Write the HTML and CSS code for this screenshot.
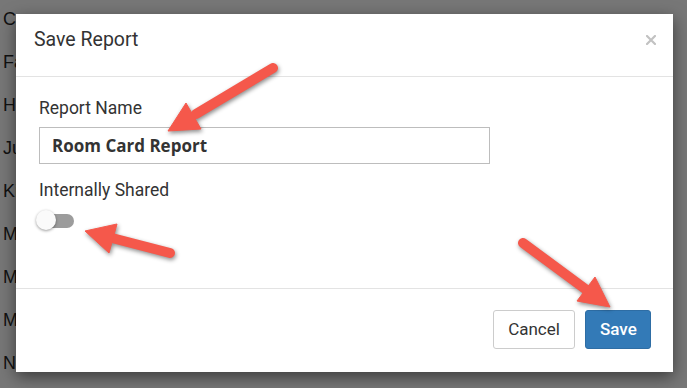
FILE: index.html
```html
<!DOCTYPE html>
<html lang="en-us">
<head>
    <meta charset="utf-8"/>
    <title>Save Report</title>
    <link rel="stylesheet" href="styles.css">
</head>
<body>

    <ul class="names">
        <li>C</li>
        <li>Fa</li>
        <li>H</li>
        <li>Ju</li>
        <li>Ki</li>
        <li>M</li>
        <li>M</li>
        <li>M</li>
        <li>N</li>
    </ul>

    <div class="modal">
        <div class="modal-header">
            <h4 class="modal-title">Save Report</h4>
            <button class="close" type="button" aria-label="Close">
                <svg width="10" height="10" viewBox="0 0 10 10">
                    <path d="M1 1L9 9M9 1L1 9" stroke="#c2c2c2" stroke-width="2.2" stroke-linecap="square"/>
                </svg>
            </button>
        </div>
        <div class="modal-body">
            <label for="reportName">Report Name</label>
            <input id="reportName" type="text" value="Room Card Report">
            <label class="shared-label">Internally Shared</label>
            <div class="toggle">
                <span class="toggle-track"></span>
                <span class="toggle-knob"></span>
            </div>
        </div>
        <div class="modal-footer">
            <button class="btn btn-default" type="button">Cancel</button>
            <button class="btn btn-primary" type="button">Save</button>
        </div>
    </div>

    <!-- annotation arrows drawn over the screenshot -->
    <svg class="arrows" width="687" height="388" viewBox="0 0 687 388">
        <g fill="#f5584b" stroke="#f5584b">
            <line x1="273" y1="68" x2="196" y2="114" stroke-width="10" stroke-linecap="round"/>
            <polygon points="168,131 201,129 186,103" stroke-width="1" stroke-linejoin="round"/>

            <line x1="170" y1="253" x2="112" y2="238" stroke-width="10" stroke-linecap="round"/>
            <polygon points="85,231 117,224 109,253" stroke-width="1" stroke-linejoin="round"/>

            <line x1="523" y1="243" x2="588" y2="291" stroke-width="10" stroke-linecap="round"/>
            <polygon points="610,307 577,301 595,277" stroke-width="1" stroke-linejoin="round"/>
        </g>
    </svg>

</body>
</html>
```

FILE: styles.css
```css
body {
    margin: 0;
    width: 687px;
    height: 388px;
    overflow: hidden;
    background: #777;
    font-family: Roboto, sans-serif;
    position: relative;
}

.names {
    list-style: none;
    margin: -2px 0 0;
    padding: 0 0 0 3px;
    font-family: "Liberation Sans", Arial, sans-serif;
    font-size: 18px;
    line-height: 43px;
    color: #111;
}

/* the dialog sits on top of the page */
.modal {
    position: absolute;
    left: 16px;
    top: 14px;
    width: 657px;
    height: 358px;
    background: #fff;
    box-shadow: 0 5px 15px rgba(0, 0, 0, .5);
    display: flex;
    flex-direction: column;
}

.modal-header {
    box-sizing: border-box;
    height: 63px;
    padding: 14px 17px 0 18px;
    border-bottom: 1px solid #e3e3e3;
    display: flex;
    justify-content: space-between;
    align-items: flex-start;
}

.modal-title {
    margin: 0;
    font-size: 19.5px;
    font-weight: 400;
    color: #333;
    line-height: normal;
}

.close {
    border: 0;
    background: none;
    padding: 0;
    margin-top: 7px;
    width: 10px;
    height: 10px;
    display: block;
}

.close svg {
    display: block;
}

.modal-body {
    flex: 1;
    padding: 21px 23px 0;
}

label {
    display: block;
    font-size: 17.5px;
    color: #333;
    line-height: 20px;
}

input[type="text"] {
    display: block;
    box-sizing: border-box;
    width: 451px;
    height: 37px;
    margin: 9px 0 0;
    padding: 0 12px;
    border: 1px solid #bdbdbd;
    border-radius: 0;
    font-family: "Open Sans", sans-serif;
    font-weight: 700;
    font-size: 17px;
    color: #333;
    outline: none;
}

.shared-label {
    margin-top: 16px;
}

.toggle {
    position: relative;
    width: 38px;
    height: 20px;
    margin: 10px 0 0 -3px;
}

.toggle-track {
    position: absolute;
    left: 5px;
    top: 4px;
    width: 33px;
    height: 14px;
    border-radius: 7px;
    background: #9c9c9c;
}

.toggle-knob {
    position: absolute;
    left: 0;
    top: 0;
    width: 20px;
    height: 20px;
    border-radius: 50%;
    background: #fafafa;
    box-shadow: 0 1px 3px rgba(0, 0, 0, .4);
}

.modal-footer {
    box-sizing: border-box;
    height: 84px;
    border-top: 1px solid #e3e3e3;
    padding: 21px 22px 0;
    display: flex;
    justify-content: flex-end;
    align-items: flex-start;
    gap: 10px;
}

.btn {
    box-sizing: border-box;
    height: 39px;
    padding: 0 14px;
    border: 1px solid transparent;
    border-radius: 3px;
    font-family: Roboto, sans-serif;
    font-size: 17px;
    line-height: 37px;
}

.btn-default {
    width: 82px;
    background: #fff;
    border-color: #ccc;
    color: #333;
}

.btn-primary {
    width: 66px;
    background: #337ab7;
    border-color: #2e6da4;
    color: #fff;
    font-weight: 500;
}

.arrows {
    position: absolute;
    left: 0;
    top: 0;
    pointer-events: none;
    filter: drop-shadow(1px 2px 2px rgba(0, 0, 0, .45));
}
```
